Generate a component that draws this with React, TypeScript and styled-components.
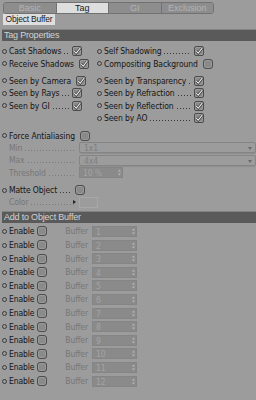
import React from "react";
import styled, { createGlobalStyle } from "styled-components";

const GlobalStyle = createGlobalStyle`
  html, body {
    margin: 0;
    padding: 0;
    background: #9c9c9c;
  }
  body {
    width: 256px;
    height: 400px;
    overflow: hidden;
    font-family: "Liberation Sans Narrow", "DejaVu Sans Condensed", "Liberation Sans", sans-serif;
    font-size: 8.5px;
    letter-spacing: -0.1px;
    color: #151515;
  }
`;

const TABS = ["Basic", "Tag", "GI", "Exclusion"];
const ACTIVE_TAB = "Tag";

function Check({ checked }: { checked?: boolean }) {
  return (
    <CheckBox $checked={checked}>
      {checked && (
        <svg width="8" height="8" viewBox="0 0 8 8">
          <path d="M1.2 4.2 L3.2 6.2 L7.2 1.2" stroke="#2a2a2a" strokeWidth="2.4" fill="none" />
          <path d="M1.2 4.2 L3.2 6.2 L7.2 1.2" stroke="#efefef" strokeWidth="1.1" fill="none" />
        </svg>
      )}
    </CheckBox>
  );
}

function Spinner() {
  return (
    <SpinIcon>
      <svg width="3" height="7" viewBox="0 0 3 7">
        <path d="M0 2.5 L1.5 0.5 L3 2.5 Z" fill="#b8b8b8" />
        <path d="M0 4.5 L1.5 6.5 L3 4.5 Z" fill="#b8b8b8" />
      </svg>
    </SpinIcon>
  );
}

interface OptionProps {
  label: string;
  checked?: boolean;
  width: number;
}

function Option({ label, checked, width }: OptionProps) {
  return (
    <Row style={{ width }}>
      <Bullet />
      <Label>{label}</Label>
      <Leader />
      <Check checked={checked} />
    </Row>
  );
}

function SubRow({ label, children }: { label: string; children: React.ReactNode }) {
  return (
    <Row>
      <Indent />
      <Label $dim>{label}</Label>
      <Leader $dim />
      <FieldSlot>{children}</FieldSlot>
    </Row>
  );
}

export default function App() {
  const buffers = Array.from({ length: 12 }, (_, i) => i + 1);
  return (
    <Panel>
      <GlobalStyle />
      <TabBar>
        {TABS.map((t) => (
          <Tab key={t} $active={t === ACTIVE_TAB}>
            {t}
          </Tab>
        ))}
      </TabBar>
      <SubTab>Object Buffer</SubTab>

      <Header>Tag Properties</Header>

      <Columns $top={4}>
        <Column>
          <Option label="Cast Shadows" checked width={82} />
          <Option label="Receive Shadows" checked width={82} />
        </Column>
        <Column>
          <Option label="Self Shadowing" checked width={109} />
          <Option label="Compositing Background" width={109} />
        </Column>
      </Columns>

      <Columns $top={5}>
        <Column>
          <Option label="Seen by Camera" checked width={82} />
          <Option label="Seen by Rays" checked width={82} />
          <Option label="Seen by GI" checked width={82} />
        </Column>
        <Column>
          <Option label="Seen by Transparency" checked width={109} />
          <Option label="Seen by Refraction" checked width={109} />
          <Option label="Seen by Reflection" checked width={109} />
          <Option label="Seen by AO" checked width={109} />
        </Column>
      </Columns>

      <Block $top={5}>
        <Option label="Force Antialiasing" width={85} />
        <SubRow label="Min">
          <Dropdown>
            1x1
            <Arrow />
          </Dropdown>
        </SubRow>
        <SubRow label="Max">
          <Dropdown>
            4x4
            <Arrow />
          </Dropdown>
        </SubRow>
        <SubRow label="Threshold">
          <NumField $width={44}>
            10 %
            <Spinner />
          </NumField>
        </SubRow>
      </Block>

      <Block $top={5}>
        <Option label="Matte Object" width={85} />
        <SubRow label="Color">
          <ColorRow>
            <Pointer />
            <Swatch />
          </ColorRow>
        </SubRow>
      </Block>

      <Header $top={2}>Add to Object Buffer</Header>

      <BufferList>
        {buffers.map((n) => (
          <BufferRow key={n}>
            <Bullet />
            <EnableLabel>Enable</EnableLabel>
            <Check />
            <BufferLabel>Buffer</BufferLabel>
            <NumField $width={45}>
              {n}
              <Spinner />
            </NumField>
          </BufferRow>
        ))}
      </BufferList>
    </Panel>
  );
}

const Panel = styled.div`
  width: 256px;
  height: 400px;
  padding-top: 2px;
  box-sizing: border-box;
`;

const TabBar = styled.div`
  display: flex;
  margin-left: 3px;
  width: 211px;
  height: 12px;
  border: 1px solid #727272;
  border-radius: 3px;
  overflow: hidden;
  box-sizing: border-box;
`;

const Tab = styled.div<{ $active?: boolean }>`
  flex: 1;
  display: flex;
  align-items: center;
  justify-content: center;
  font-family: "Liberation Sans", sans-serif;
  font-size: 9px;
  letter-spacing: 0;
  background: ${({ $active }) => ($active ? "#dedede" : "#8d8d8d")};
  color: ${({ $active }) => ($active ? "#1a1a1a" : "#b4b4b4")};
  border-left: 1px solid #727272;
  &:first-child {
    border-left: none;
  }
`;

const SubTab = styled.div`
  margin-left: 3px;
  width: 52px;
  height: 11px;
  line-height: 11px;
  text-align: center;
  background: #dedede;
  font-family: "Liberation Sans", sans-serif;
  font-size: 8.5px;
  letter-spacing: -0.2px;
  color: #1a1a1a;
`;

const Header = styled.div<{ $top?: number }>`
  margin-top: ${({ $top }) => $top ?? 4}px;
  margin-left: 2px;
  height: 11px;
  line-height: 11px;
  padding-left: 2px;
  background: #5a5a5a;
  border-top: 1px solid #828282;
  color: #d2d2d2;
  font-family: "Liberation Sans", sans-serif;
  font-size: 9px;
  letter-spacing: -0.2px;
`;

const Columns = styled.div<{ $top: number }>`
  display: grid;
  grid-template-columns: 95px 1fr;
  margin-top: ${({ $top }) => $top}px;
`;

const Column = styled.div`
  display: flex;
  flex-direction: column;
`;

const Block = styled.div<{ $top: number }>`
  display: flex;
  flex-direction: column;
  margin-top: ${({ $top }) => $top}px;
`;

const Row = styled.div`
  display: flex;
  align-items: center;
  height: 12.4px;
  padding-left: 2px;
  box-sizing: border-box;
`;

const Bullet = styled.span`
  flex: none;
  width: 3px;
  height: 3px;
  border: 1px solid #3a3a3a;
  border-radius: 50%;
  margin-right: 2px;
`;

const Indent = styled.span`
  flex: none;
  width: 7px;
`;

const Label = styled.span<{ $dim?: boolean }>`
  flex: none;
  white-space: nowrap;
  color: ${({ $dim }) => ($dim ? "#767676" : "#151515")};
`;

const EnableLabel = styled(Label)`
  width: 28px;
`;

const Leader = styled.span<{ $dim?: boolean }>`
  flex: 1;
  height: 1px;
  margin: 5px 3px 0 2px;
  background-image: radial-gradient(
    circle,
    ${({ $dim }) => ($dim ? "#7a7a7a" : "#3a3a3a")} 0.6px,
    transparent 0.7px
  );
  background-size: 3px 1px;
`;

const CheckBox = styled.span<{ $checked?: boolean }>`
  flex: none;
  width: 8px;
  height: 8px;
  border: 1px solid #4c4c4c;
  border-radius: ${({ $checked }) => ($checked ? "2px" : "3px")};
  background: #8a8a8a;
  box-shadow: inset 0 0 0 1px #9a9a9a;
  display: flex;
  align-items: center;
  justify-content: center;
`;

const FieldSlot = styled.div`
  flex: none;
  width: 177px;
  display: flex;
  justify-content: flex-start;
`;

const Dropdown = styled.div`
  position: relative;
  width: 100%;
  height: 11px;
  line-height: 11px;
  padding-left: 4px;
  box-sizing: border-box;
  border: 1px solid #858585;
  border-radius: 2px;
  box-shadow: 0 1px 0 #8e8e8e;
  color: #7e7e7e;
`;

const Arrow = styled.span`
  position: absolute;
  right: 3px;
  top: 4px;
  width: 0;
  height: 0;
  border-left: 2.5px solid transparent;
  border-right: 2.5px solid transparent;
  border-top: 3px solid #6a6a6a;
`;

const NumField = styled.div<{ $width: number }>`
  position: relative;
  flex: none;
  width: ${({ $width }) => $width}px;
  height: 11px;
  line-height: 11px;
  padding-left: 3px;
  box-sizing: border-box;
  background: #8a8a8a;
  border: 1px solid #858585;
  color: #a4a4a4;
`;

const SpinIcon = styled.span`
  position: absolute;
  right: 1px;
  top: 1px;
  width: 4px;
  height: 7px;
  display: flex;
  align-items: center;
  justify-content: center;
`;

const ColorRow = styled.div`
  display: flex;
  align-items: center;
  margin-left: -6px;
`;

const Pointer = styled.span`
  width: 0;
  height: 0;
  border-top: 2.5px solid transparent;
  border-bottom: 2.5px solid transparent;
  border-left: 3px solid #222;
  margin-right: 3px;
`;

const Swatch = styled.span`
  width: 19px;
  height: 11px;
  border: 1px solid #a8a8a8;
  box-sizing: border-box;
  background: #9c9c9c;
`;

const BufferList = styled.div`
  display: flex;
  flex-direction: column;
  margin-top: 2px;
`;

const BufferRow = styled.div`
  display: flex;
  align-items: center;
  height: 13.6px;
  padding-left: 2px;
`;

const BufferLabel = styled.span`
  flex: none;
  width: 45px;
  padding-right: 4px;
  box-sizing: border-box;
  text-align: right;
  color: #767676;
`;
